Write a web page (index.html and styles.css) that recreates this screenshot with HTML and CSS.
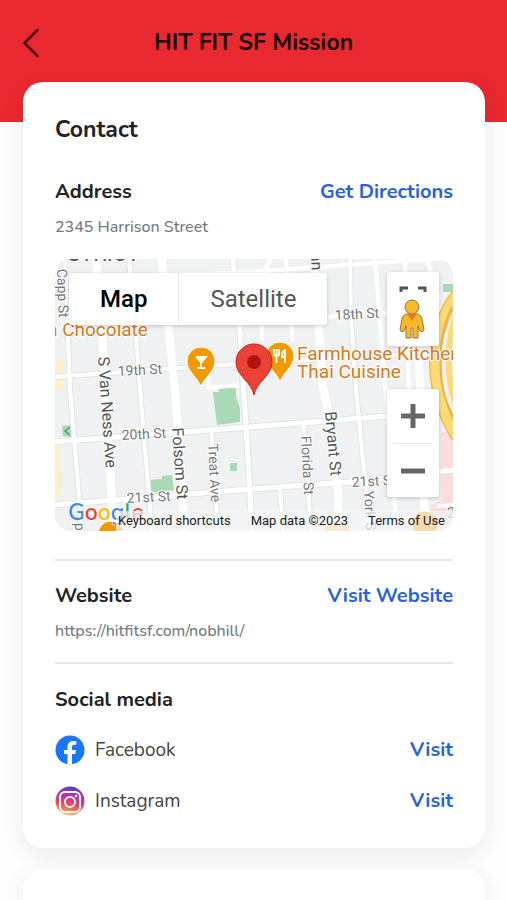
FILE: index.html
```html
<!DOCTYPE html>
<html lang="en">
<head>
<meta charset="utf-8">
<meta name="viewport" content="width=device-width, initial-scale=1">
<title>HIT FIT SF Mission</title>
<link rel="stylesheet" href="styles.css">
</head>
<body>
<header class="topbar">
  <button class="back" type="button" aria-label="Back">
    <svg width="18" height="30" viewBox="0 0 18 30"><path d="M15.500 2L2.500 15L15.500 28" fill="none" stroke="#4a0d10" stroke-width="2.600" stroke-linecap="round" stroke-linejoin="round"/></svg>
  </button>
  <h1 class="page-title">HIT FIT SF Mission</h1>
</header>
<main class="content">
  <article class="card">
    <h2 class="card-title">Contact</h2>

    <section class="section section-address">
      <div class="row">
        <h3 class="label">Address</h3>
        <a class="action" href="#directions">Get Directions</a>
      </div>
      <p class="detail">2345 Harrison Street</p>
      <div class="map">
        <svg class="map-art" viewBox="0 0 398 272" preserveAspectRatio="xMidYMid slice" aria-hidden="true">
          <rect width="398" height="272" fill="#f0f1f3"/>
          <path d="M0 102H9V131H0ZM0 184L5 187L4 205L8 218L4 240H0Z" fill="#fcf0c8"/>
          <path d="M386 174L398 170V272H376V247L387 240Z" fill="#fbdedb"/>
          <g fill="#a9dab5">
            <path d="M158 133L164 133V129H181V138L185 149V163L162 166Z"/>
            <path d="M95 221L107 220V217L117 216L119 231L96 234Z"/>
            <rect x="175" y="204" width="7" height="8"/>
            <path d="M7 167L16 166V178L8 177Z"/>
            <path d="M388 25H398V33H388Z"/>
          </g>
          <path d="M15 168L10 172L15 176" fill="none" stroke="#449c61" stroke-width="1.500"/>
          <g fill="none" stroke="#e2e4e7" stroke-width="6">
            <path d="M10 0L15 131L27 272M74 0L81 73L85 131L97 272M156 169L163 272"/>
            <path d="M248 162L256 272M225 229L228 272M295 0L296 60L301 131L315 272"/>
            <path d="M-2 118L195 104L375 94"/>
          </g>
          <g fill="none" stroke="#e2e4e7" stroke-width="7">
            <path d="M-4 183L195 168L384 153M-4 246L62 241L195 230L295 223L398 211"/>
            <path d="M178 0L185 73L193 198L197 272"/>
          </g>
          <g fill="none" stroke="#fff" stroke-width="4">
            <path d="M10 0L15 131L27 272M74 0L81 73L85 131L97 272"/>
            <path d="M152 106L154 129L183 126M156 169L163 272M216 0L205 20L207 82M231 0L237 73L238 82M295 0L296 60L301 131L315 272M320 0L328 100L342 272M350 0L354 130M372 0L384 40"/>
            <path d="M248 162L256 272M225 229L228 272M386 212H398"/>
            <path d="M-2 20L195 13L332 3L398 -1M235 65L262 59L398 49"/>
            <path d="M-2 118L195 104L375 94M382 247L398 246"/>
          </g>
          <g fill="none" stroke="#fff" stroke-width="5">
            <path d="M-4 183L195 168L384 153M-4 246L62 241L195 230L295 223L398 211"/>
            <path d="M178 0L185 73L193 198L197 272"/>
          </g>
          <g fill="none" stroke="#fff" stroke-width="8">
            <path d="M41 0L47 73L57 241L59 272M107 0L114 73L120 131L130 272M259 0L268 128L273 153L283 231V272M363 90L366 140L370 272"/>
          </g>
          <path d="M402 36C390 48 380 78 380 102C380 128 387 155 402 178" fill="none" stroke="#eebc4c" stroke-width="12"/>
          <path d="M402 36C390 48 380 78 380 102C380 128 387 155 402 178" fill="none" stroke="#fbdb78" stroke-width="9"/>
          <path d="M397 48C383 75 386 103 386 112C386 130 392 148 402 164" fill="none" stroke="#e9b63f" stroke-width="2"/>
          <path d="M402 54C391 80 391 122 402 148" fill="none" stroke="#fbdb78" stroke-width="6"/>

          <g class="street">
            <text class="district" x="12" y="2">STRICT</text>
            <text transform="translate(2 10) rotate(88)">Capp St</text>
            <text x="63" y="117" transform="rotate(-3 63 117)">19th St</text>
            <text x="67" y="181" transform="rotate(-3 67 181)">20th St</text>
            <text x="72" y="244" transform="rotate(-3 72 244)">21st St</text>
            <text x="280" y="61" transform="rotate(-3 280 61)">18th St</text>
            <text x="297" y="228" transform="rotate(-3 297 228)">21st St</text>
            <text transform="translate(153 185) rotate(87)">Treat Ave</text>
            <text transform="translate(246 177) rotate(87)">Florida St</text>
            <text transform="translate(309 232) rotate(87)">York St</text>
            <text transform="translate(20 264) rotate(88)">pp</text>
            <text x="392" y="259">2</text>
          </g>
          <g class="street street-major">
            <text transform="translate(43 98) rotate(86)">S Van Ness Ave</text>
            <text transform="translate(117 169) rotate(86)">Folsom St</text>
            <text transform="translate(270 153) rotate(85)">Bryant St</text>
            <text transform="translate(256 -6) rotate(88)">an</text>
          </g>
          <g class="place">
            <text x="-8" y="77">n Chocolate</text>
            <text x="242" y="101">Farmhouse Kitchen</text>
            <text x="242" y="119">Thai Cuisine</text>
          </g>

          <g fill="#f29900" stroke="#fff" stroke-width="1">
            <path d="M146 128C143 118 132 113 132 102A14 14 0 0 1 160 102C160 113 149 118 146 128Z"/>
            <path d="M225 123C222 113 211 108 211 97A14 14 0 0 1 239 97C239 108 228 113 225 123Z"/>
            <circle cx="56" cy="275" r="13"/>
            <circle cx="370" cy="265" r="13"/>
            <circle cx="282" cy="276" r="14" fill="#f8ce8a"/>
          </g>
          <g fill="none" stroke="#fff" stroke-width="1.800">
            <path d="M141 98H151L146 104V109M142 109H150M143 100H149L146 103Z"/>
            <path d="M219 90V95Q219 97 221.500 97T224 95V90M221.500 90V104"/>
            <path d="M230 104V91Q227 92 227 98H230"/>
          </g>
          <path d="M199 136C197 123 181 117 181 103A18 18 0 0 1 217 103C217 117 201 123 199 136Z" fill="#ea4335" stroke="#c5221f" stroke-width="1"/>
          <circle cx="199" cy="103" r="7" fill="#b31412"/>
          <text class="google" x="13" y="261"><tspan fill="#4285f4">G</tspan><tspan fill="#ea4335">o</tspan><tspan fill="#fbbc04">o</tspan><tspan fill="#4285f4">g</tspan><tspan fill="#34a853">l</tspan><tspan fill="#ea4335">e</tspan></text>
        </svg>
        <div class="map-type">
          <button class="type type-on" type="button">Map</button>
          <button class="type" type="button">Satellite</button>
        </div>
        <button class="street-view" type="button" aria-label="Street view">
          <svg width="52" height="74" viewBox="0 0 52 74">
            <path d="M14 20V16H21M31 16H38V20" fill="none" stroke="#555" stroke-width="3"/>
            <g fill="#fbb829" stroke="#8f7440" stroke-width="1">
              <path d="M19 42H31Q34 43 35 47L37 58Q36 61 33 59L31 54V66H26V56H24V66H19V54L17 59Q14 61 13 58L15 47Q16 43 19 42Z"/>
              <circle cx="25" cy="35" r="7"/>
            </g>
            <path d="M20 42H30L25 49Z" fill="#e27b1d"/>
          </svg>
        </button>
        <div class="zoom">
          <button class="zoom-step" type="button" aria-label="Zoom in"><svg width="26" height="26" viewBox="0 0 26 26"><path d="M1 13H25M13 1V25" stroke="#666" stroke-width="5"/></svg></button>
          <button class="zoom-step" type="button" aria-label="Zoom out"><svg width="26" height="26" viewBox="0 0 26 26"><path d="M1 13H25" stroke="#666" stroke-width="5"/></svg></button>
        </div>
        <div class="credits">
          <button class="credit" type="button">Keyboard shortcuts</button>
          <span class="credit">Map data ©2023</span>
          <a class="credit" href="#terms">Terms of Use</a>
        </div>
      </div>
    </section>

    <section class="section section-website">
      <div class="row">
        <h3 class="label">Website</h3>
        <a class="action" href="#website">Visit Website</a>
      </div>
      <p class="detail">https://hitfitsf.com/nobhill/</p>
    </section>

    <section class="section-social">
      <h3 class="label">Social media</h3>
      <ul class="socials">
        <li class="social">
          <svg width="30" height="30" viewBox="0 0 30 30" aria-hidden="true">
            <circle cx="15" cy="15" r="14.500" fill="#1877f2"/>
            <path d="M12.500 29.300V19H9V15H12.500V12C12.500 8.200 14.700 6 18.200 6Q20 6 21.300 6.300V9.800H19.300C17.500 9.800 17 10.900 17 12.100V15H21L20.300 19H17V29.300Q14.700 29.700 12.500 29.300Z" fill="#fff"/>
          </svg>
          <span class="social-name">Facebook</span>
          <a class="action" href="#facebook">Visit</a>
        </li>
        <li class="social">
          <svg width="30" height="30" viewBox="0 0 30 30" aria-hidden="true">
            <defs><linearGradient id="insta" x1="0.600" y1="0" x2="0.400" y2="1"><stop offset="0" stop-color="#4b42d0"/><stop offset="0.300" stop-color="#b32fb0"/><stop offset="0.600" stop-color="#f0405d"/><stop offset="0.850" stop-color="#f98b52"/><stop offset="1" stop-color="#fdd08a"/></linearGradient></defs>
            <circle cx="15" cy="15" r="14.500" fill="url(#insta)"/>
            <g fill="none" stroke="#fff" stroke-width="2"><rect x="5" y="6" width="20" height="20" rx="5"/><circle cx="15" cy="16" r="5"/></g>
            <circle cx="21" cy="10" r="1.300" fill="#fff"/>
          </svg>
          <span class="social-name">Instagram</span>
          <a class="action" href="#instagram">Visit</a>
        </li>
      </ul>
    </section>
  </article>
  <article class="card"></article>
</main>
</body>
</html>
```
FILE: styles.css
```css
* { box-sizing: border-box; }

body {
  margin: 0;
  background: #fefefe;
  color: #222;
  font-family: Nunito, Lato, sans-serif;
}

h1, h2, h3, p, ul { margin: 0; padding: 0; }

button {
  padding: 0;
  border: 0;
  background: none;
  font: inherit;
  color: inherit;
  cursor: pointer;
}

a { color: inherit; text-decoration: none; }

svg { display: block; }

.topbar {
  display: grid;
  grid-template-columns: 20px 1fr 20px;
  align-items: center;
  padding: 27px 22px 63px;
  background: #ea2830;
}

.page-title {
  font-size: 23px;
  line-height: 32px;
  font-weight: 700;
  text-align: center;
  color: #180506;
}

.content {
  display: flex;
  flex-direction: column;
  gap: 21px;
  margin-top: -40px;
  padding: 0 22px 0 23px;
}

.card {
  min-height: 31px;
  padding: 32px;
  border-radius: 20px;
  background: #fff;
  box-shadow: 0 6px 22px rgba(30, 30, 50, 0.09);
}

.card:empty {
  padding: 0;
  border-radius: 20px 20px 0 0;
}

.card-title {
  margin-bottom: 32px;
  font-size: 23px;
  line-height: 32px;
  font-weight: 700;
}

.section { border-bottom: 2px solid #e9e9ea; }

.section-address { padding-bottom: 28px; }

.section-website { padding: 21px 0 20px; }

.section-social { padding-top: 22px; }

.row {
  display: flex;
  justify-content: space-between;
  align-items: center;
}

.label, .action {
  font-size: 20px;
  line-height: 28px;
  font-weight: 700;
}

.action { color: #2962dc; }

.detail {
  margin-top: 10px;
  font-size: 16px;
  line-height: 22px;
  font-weight: 500;
  color: #727c82;
}

.map {
  position: relative;
  height: 272px;
  margin-top: 21px;
  overflow: hidden;
  border-radius: 16px;
  font-family: Roboto, sans-serif;
}

.map-art { width: 100%; height: 100%; }

.street {
  font-size: 14px;
  fill: #74787d;
  stroke: #fff;
  stroke-width: 2px;
  paint-order: stroke;
}

.street-major { font-size: 16px; fill: #505459; }

.district { font-size: 22px; fill: #505459; }

.place {
  font-size: 19px;
  fill: #d5791a;
  stroke: #fff;
  stroke-width: 2px;
  paint-order: stroke;
}

.google {
  font-family: Nunito, Lato, sans-serif;
  font-size: 23px;
  font-weight: 600;
  stroke: #fff;
  stroke-width: 1px;
  paint-order: stroke;
}

.map-type, .street-view, .zoom {
  position: absolute;
  background: #fff;
  border-radius: 3px;
  box-shadow: 0 1px 4px rgba(0, 0, 0, 0.2);
}

.map-type {
  top: 14px;
  left: 14px;
  display: flex;
}

.type {
  padding: 0 31px;
  font-size: 24px;
  line-height: 52px;
  color: #565656;
}

.type-on {
  border-right: 1px solid #e8e8e8;
  font-weight: 500;
  color: #000;
}

.street-view { top: 13px; right: 14px; }

.zoom {
  top: 130px;
  right: 14px;
  display: flex;
  flex-direction: column;
  padding: 0 6px;
}

.zoom-step {
  display: flex;
  align-items: center;
  justify-content: center;
  width: 40px;
  height: 54px;
}

.zoom-step + .zoom-step { border-top: 1px solid #e6e6e6; }

.credits {
  position: absolute;
  right: 0;
  bottom: 0;
  display: flex;
  gap: 20px;
  padding: 0 8px 0 2px;
  background: rgba(245, 246, 247, 0.7);
}

.credit {
  font-size: 13px;
  line-height: 20px;
  color: #222;
}

.socials {
  display: grid;
  gap: 21px;
  margin-top: 21px;
  list-style: none;
}

.social {
  display: flex;
  align-items: center;
  gap: 10px;
}

.social-name {
  flex: 1;
  font-size: 19px;
  line-height: 28px;
  color: #444;
}
```
